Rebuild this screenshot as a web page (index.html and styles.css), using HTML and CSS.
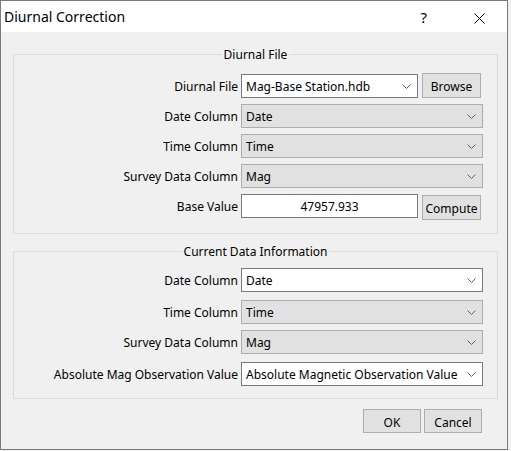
FILE: index.html
```html
<!DOCTYPE html>
<html>
<head>
<meta charset="utf-8">
<link rel="stylesheet" href="styles.css">
</head>
<body>
<div class="window">
  <div class="titlebar">
    <span class="title">Diurnal Correction</span>
    <span class="help">?</span>
    <span class="close">
      <svg width="11" height="11" viewBox="0 0 11 11"><path d="M0.5 0.5 L10.5 10.5 M10.5 0.5 L0.5 10.5" stroke="#000" stroke-width="1" fill="none"/></svg>
    </span>
  </div>
  <div class="client">
    <fieldset class="group g1">
      <legend>Diurnal File</legend>
      <div class="grid">
        <div class="label">Diurnal File</div>
        <div class="field split">
          <div class="combo white short"><span>Mag-Base Station.hdb</span><svg class="chev" width="9" height="5" viewBox="0 0 9 5"><path d="M0.5 0.5 L4.5 4.5 L8.5 0.5" stroke="#606060" fill="none"/></svg></div>
          <div class="btn browse">Browse</div>
        </div>

        <div class="label">Date Column</div>
        <div class="field"><div class="combo gray"><span>Date</span><svg class="chev" width="9" height="5" viewBox="0 0 9 5"><path d="M0.5 0.5 L4.5 4.5 L8.5 0.5" stroke="#606060" fill="none"/></svg></div></div>

        <div class="label">Time Column</div>
        <div class="field"><div class="combo gray"><span>Time</span><svg class="chev" width="9" height="5" viewBox="0 0 9 5"><path d="M0.5 0.5 L4.5 4.5 L8.5 0.5" stroke="#606060" fill="none"/></svg></div></div>

        <div class="label">Survey Data Column</div>
        <div class="field"><div class="combo gray"><span>Mag</span><svg class="chev" width="9" height="5" viewBox="0 0 9 5"><path d="M0.5 0.5 L4.5 4.5 L8.5 0.5" stroke="#606060" fill="none"/></svg></div></div>

        <div class="label">Base Value</div>
        <div class="field split">
          <div class="textbox short">47957.933</div>
          <div class="btn compute">Compute</div>
        </div>
      </div>
    </fieldset>

    <fieldset class="group g2">
      <legend>Current Data Information</legend>
      <div class="grid grid2">
        <div class="label">Date Column</div>
        <div class="field"><div class="combo white"><span>Date</span><svg class="chev" width="9" height="5" viewBox="0 0 9 5"><path d="M0.5 0.5 L4.5 4.5 L8.5 0.5" stroke="#606060" fill="none"/></svg></div></div>

        <div class="label gap8">Time Column</div>
        <div class="field gap8"><div class="combo gray"><span>Time</span><svg class="chev" width="9" height="5" viewBox="0 0 9 5"><path d="M0.5 0.5 L4.5 4.5 L8.5 0.5" stroke="#606060" fill="none"/></svg></div></div>

        <div class="label gap6">Survey Data Column</div>
        <div class="field gap6"><div class="combo gray"><span>Mag</span><svg class="chev" width="9" height="5" viewBox="0 0 9 5"><path d="M0.5 0.5 L4.5 4.5 L8.5 0.5" stroke="#606060" fill="none"/></svg></div></div>

        <div class="label gap8">Absolute Mag Observation Value</div>
        <div class="field gap8"><div class="combo white"><span>Absolute Magnetic Observation Value</span><svg class="chev" width="9" height="5" viewBox="0 0 9 5"><path d="M0.5 0.5 L4.5 4.5 L8.5 0.5" stroke="#606060" fill="none"/></svg></div></div>
      </div>
    </fieldset>

    <div class="actions">
      <div class="btn action">OK</div>
      <div class="btn action">Cancel</div>
    </div>
  </div>
</div>
</body>
</html>
```

FILE: styles.css
```css
html, body {
  margin: 0;
  padding: 0;
}
body {
  background: #f0f0f0;
  font-family: "Noto Sans", "Open Sans", sans-serif;
  color: #000;
  width: 511px;
  height: 451px;
  overflow: hidden;
}
.window {
  width: 508px;
  height: 450px;
  box-sizing: border-box;
  border: 1px solid #7a7a7a;
  background: #f0f0f0;
  display: flex;
  flex-direction: column;
}
.titlebar {
  height: 31px;
  background: #fff;
  display: flex;
  align-items: center;
  padding-left: 3px;
}
.title {
  font-size: 14px;
  line-height: 20px;
  flex: 1;
  margin-top: 1px;
}
.help {
  font-size: 15px;
  line-height: 20px;
  margin-right: 29px;
  margin-top: 1px;
}
.close {
  width: 46px;
  height: 31px;
  margin-right: 5px;
  display: flex;
  align-items: center;
  justify-content: center;
}
.close svg {
  display: block;
  margin-top: 3px;
}
.client {
  flex: 1;
  padding: 14px 9px 0 12px;
  font-size: 12px;
}
.group {
  margin: 0;
  border: 1px solid #dcdcdc;
  padding: 11px 14px 15px 14px;
  min-width: 0;
}
.group legend {
  margin: 0 auto;
  padding: 0 2px;
  line-height: 17px;
  height: 17px;
  font-size: 12px;
}
.g2 {
  margin-top: 9px;
  padding-top: 8px;
  padding-bottom: 12px;
}
.grid {
  display: grid;
  grid-template-columns: 1fr 242px;
  column-gap: 3px;
  row-gap: 6px;
}
.grid2 {
  row-gap: 0;
}
.gap8 {
  margin-top: 8px;
}
.gap6 {
  margin-top: 6px;
}
.label {
  text-align: right;
  height: 24px;
  line-height: 26px;
  white-space: nowrap;
}
.field {
  height: 24px;
  display: flex;
}
.split {
  gap: 4px;
}
.combo, .textbox {
  box-sizing: border-box;
  height: 24px;
  width: 242px;
  display: flex;
  align-items: center;
  padding: 0 6px 0 4px;
  line-height: 22px;
  white-space: nowrap;
}
.combo span {
  flex: 1;
  margin-top: 2px;
}
.combo .chev {
  display: block;
  flex: none;
}
.short {
  width: 177px;
}
.white {
  background: #fff;
  border: 1px solid #7a7a7a;
}
.gray {
  background: #e1e1e1;
  border: 1px solid #adadad;
}
.textbox {
  background: #fff;
  border: 1px solid #7a7a7a;
  justify-content: center;
  padding: 2px 0 0 0;
}
.btn {
  box-sizing: border-box;
  background: #e1e1e1;
  border: 1px solid #adadad;
  display: flex;
  align-items: center;
  justify-content: center;
  white-space: nowrap;
  padding-top: 2px;
}
.browse {
  width: 59px;
  height: 25px;
  margin-top: -1px;
}
.compute {
  width: 59px;
  height: 25px;
  margin: 1px 0 -2px 0;
}
.actions {
  display: flex;
  justify-content: flex-end;
  gap: 3px;
  margin-top: 10px;
  padding-right: 16px;
}
.action {
  width: 58px;
  height: 24px;
}
```
